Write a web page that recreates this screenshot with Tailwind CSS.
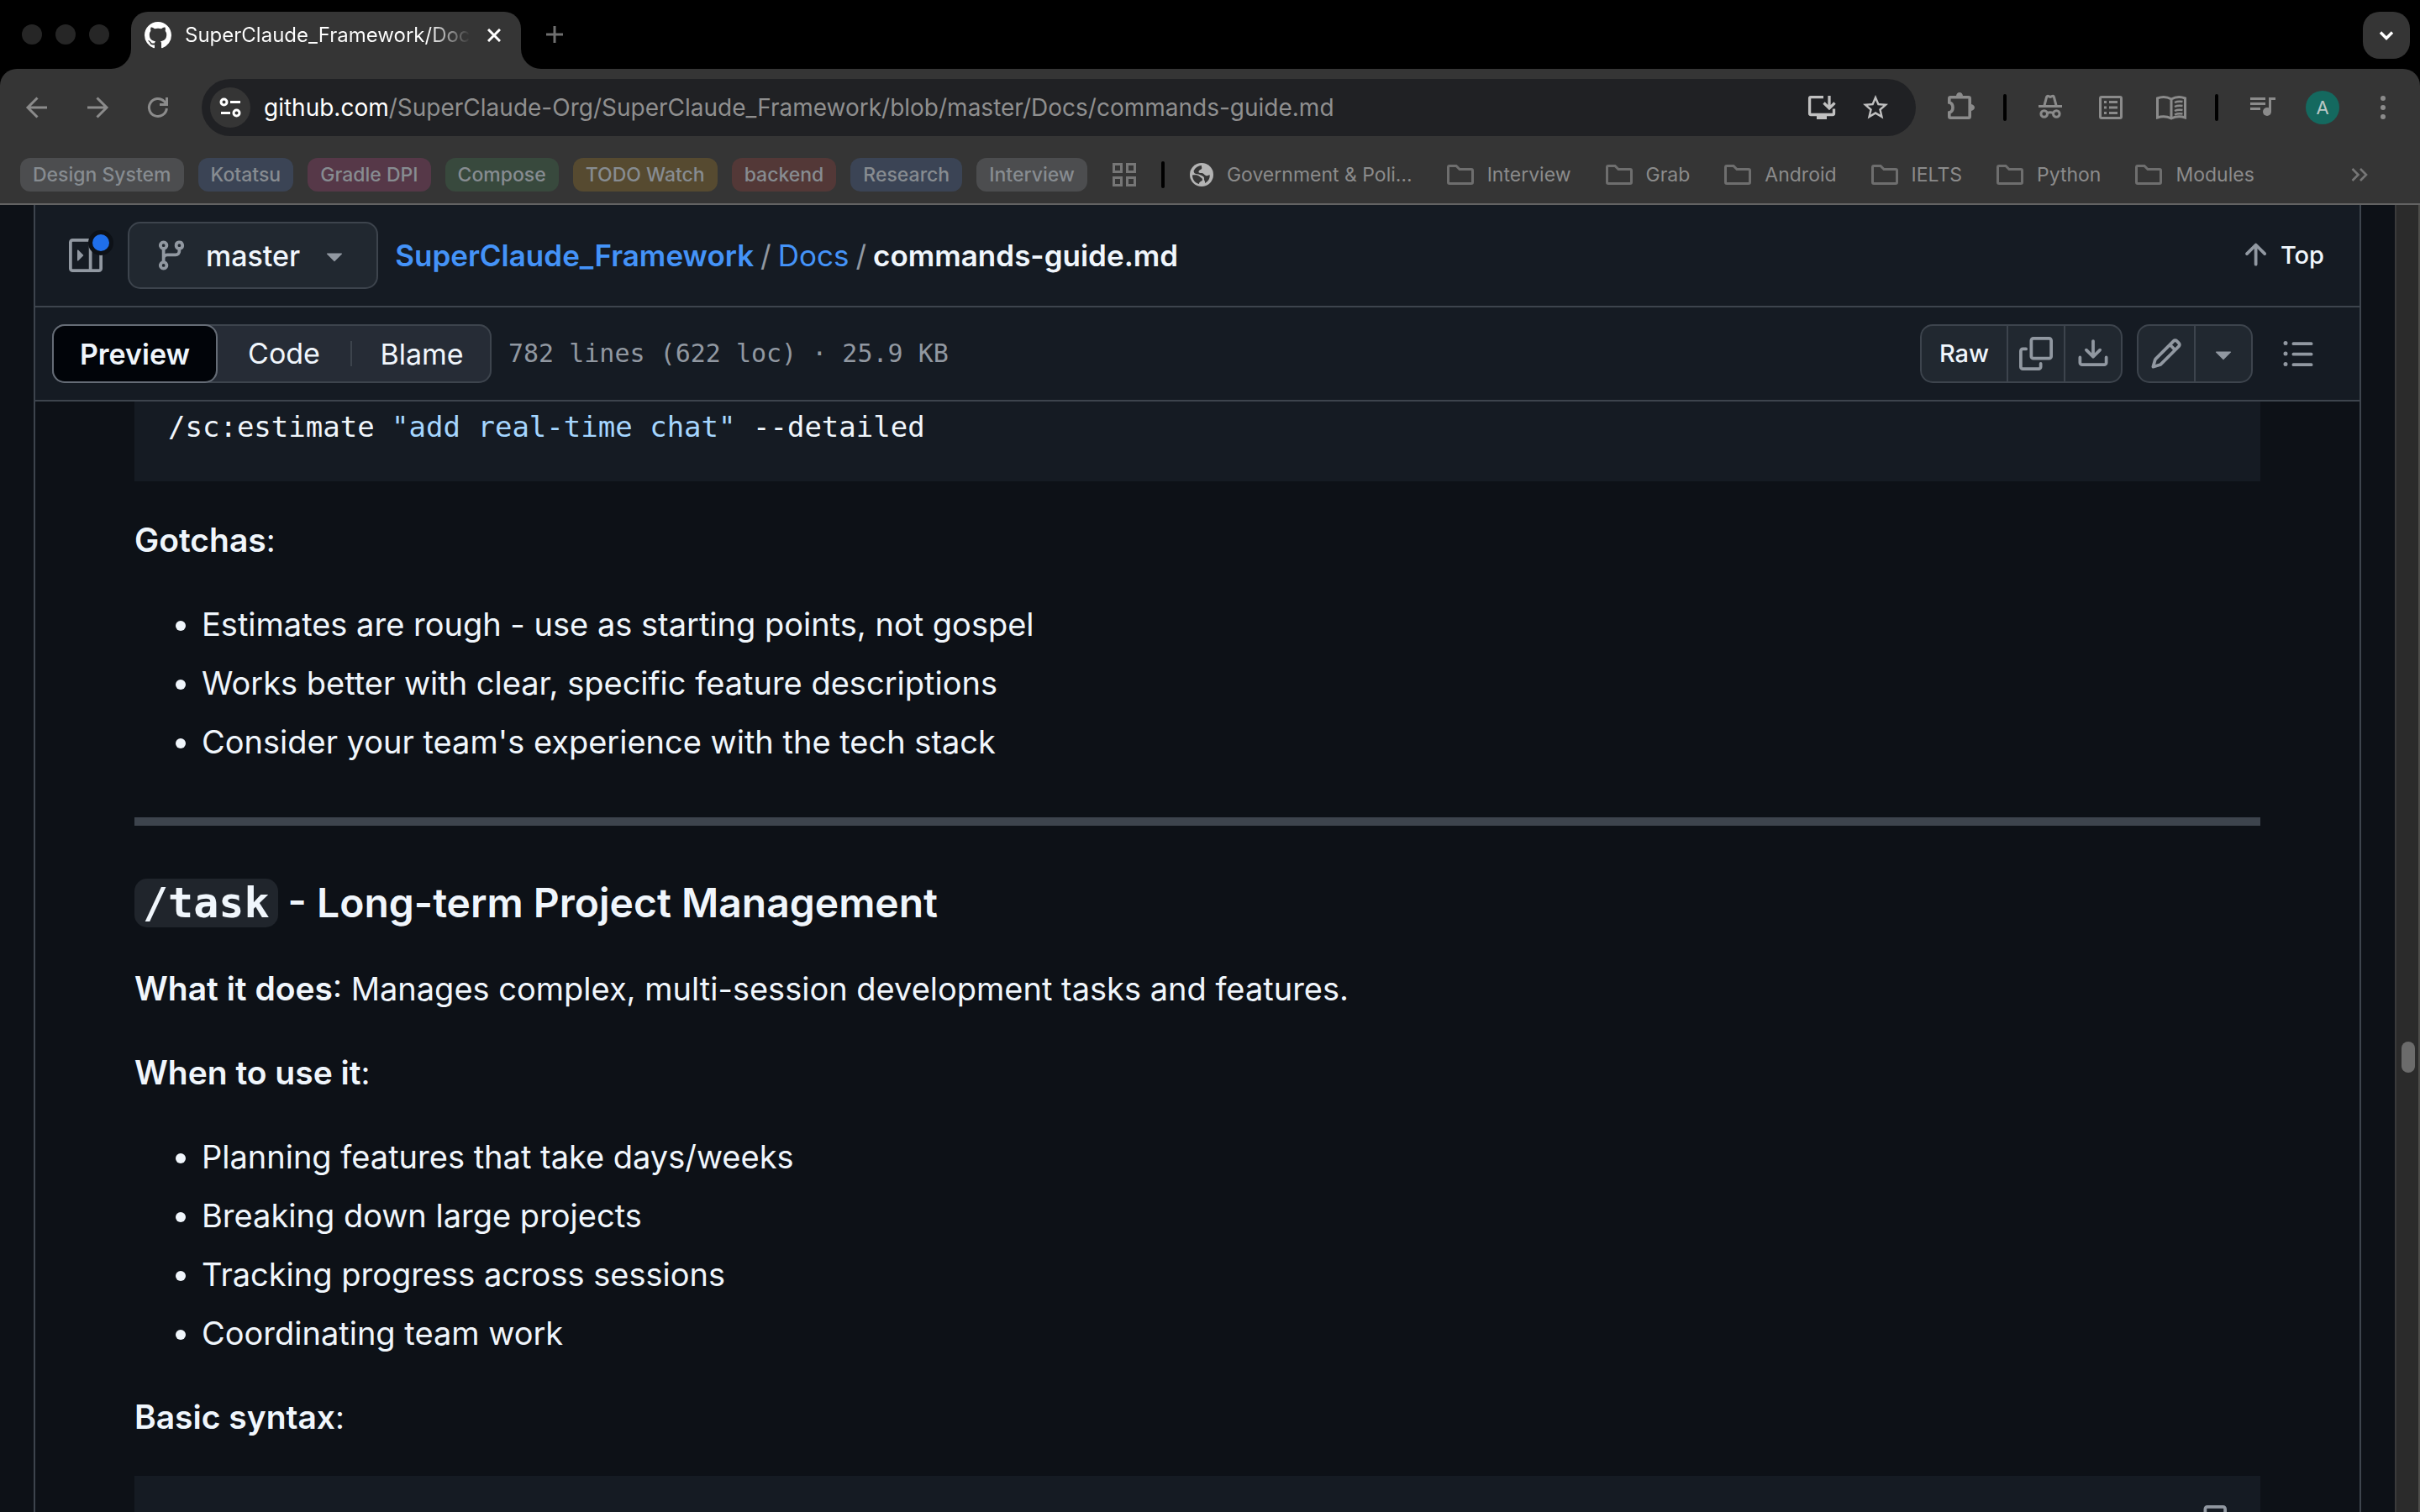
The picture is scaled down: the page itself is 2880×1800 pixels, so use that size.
<!DOCTYPE html>
<html lang="en">
<head>
<meta charset="utf-8">
<title>SuperClaude_Framework/Docs/commands-guide.md</title>
<script src="https://cdn.jsdelivr.net/npm/@tailwindcss/browser@4"></script>
</head>
<body class="flex h-screen flex-col overflow-hidden bg-black font-['Inter',sans-serif] text-[#f0f6fc]">

<!-- Tab strip -->
<header class="shrink-0 bg-black">
  <div class="flex h-[82px] items-end">
    <div class="flex h-full items-center gap-4 pl-[26px] pr-[2px]">
      <span class="size-6 rounded-full bg-[#262626]"></span>
      <span class="size-6 rounded-full bg-[#262626]"></span>
      <span class="size-6 rounded-full bg-[#262626]"></span>
    </div>
    <div class="size-6 bg-[#353535]"><div class="size-6 rounded-br-[24px] bg-black"></div></div>
    <div class="flex h-[68px] w-[464px] items-center rounded-t-[20px] bg-[#353535] pb-3 pl-4 pr-4">
      <svg class="size-8 shrink-0" viewBox="0 0 16 16" fill="#fff"><path d="M8 0c4.42 0 8 3.58 8 8a8.013 8.013 0 0 1-5.45 7.59c-.4.08-.55-.17-.55-.38 0-.27.01-1.13.01-2.2 0-.75-.25-1.23-.54-1.48 1.78-.2 3.65-.88 3.65-3.95 0-.88-.31-1.59-.82-2.15.08-.2.36-1.02-.08-2.12 0 0-.67-.22-2.2.82-.64-.18-1.32-.27-2-.27-.68 0-1.36.09-2 .27-1.53-1.03-2.2-.82-2.2-.82-.44 1.1-.16 1.92-.08 2.12-.51.56-.82 1.28-.82 2.15 0 3.06 1.86 3.75 3.64 3.95-.23.2-.44.55-.51 1.07-.46.21-1.61.55-2.33-.66-.15-.24-.6-.83-1.23-.82-.67.01-.27.38.01.53.34.19.73.9.82 1.13.16.45.68 1.31 2.69.94 0 .67.01 1.3.01 1.49 0 .21-.15.45-.55.38A7.995 7.995 0 0 1 0 8c0-4.42 3.58-8 8-8Z"/></svg>
      <span class="ml-4 flex-1 whitespace-nowrap bg-linear-to-r from-white from-85% to-transparent bg-clip-text text-2xl text-transparent">SuperClaude_Framework/Doc</span>
      <button class="ml-3 grid size-8 shrink-0 place-items-center" aria-label="Close tab"><svg class="size-4" viewBox="0 0 16 16" stroke="#fff" stroke-width="3"><path d="M1 1l14 14M15 1L1 15"/></svg></button>
    </div>
    <div class="size-6 bg-[#353535]"><div class="size-6 rounded-bl-[24px] bg-black"></div></div>
    <button class="grid h-full w-8 place-items-center" aria-label="New tab"><svg class="size-5" viewBox="0 0 20 20" stroke="#6f6f6f" stroke-width="3"><path d="M10 0v20M0 10h20"/></svg></button>
    <button class="mb-3 ml-auto mr-3 grid size-14 place-items-center rounded-[20px] bg-[#353535]" aria-label="Search tabs"><svg class="size-5" viewBox="0 0 20 20" fill="none" stroke="#fff" stroke-width="3.4"><path d="M3 6.5l7 7 7-7"/></svg></button>
  </div>
</header>

<!-- Toolbar and bookmarks -->
<nav class="shrink-0 rounded-t-[20px] border-b-2 border-[#636363] bg-[#353535]">
  <div class="flex items-center gap-8 px-6 pt-3">
    <button aria-label="Back"><svg class="size-10" viewBox="0 0 40 40" fill="none" stroke="#8b8b8b" stroke-width="3"><path d="M32 20H9M20.500 8.500L9 20l11.500 11.500"/></svg></button>
    <button aria-label="Forward"><svg class="size-10" viewBox="0 0 40 40" fill="none" stroke="#8b8b8b" stroke-width="3"><path d="M8 20h23M19.500 8.500L31 20 19.500 31.500"/></svg></button>
    <button aria-label="Reload"><svg class="size-10" viewBox="0 0 40 40" fill="none" stroke="#8b8b8b" stroke-width="3"><path d="M30.400 21A10.500 10.500 0 1 1 27.500 12.700L30 15.500M30.500 8v8.500H22"/></svg></button>
    <div class="flex h-[68px] flex-1 items-center rounded-full bg-[#202124] pl-[10px] pr-7">
      <button class="grid size-12 place-items-center rounded-full bg-[#353535]" aria-label="Site information"><svg class="h-6 w-[26px]" viewBox="0 0 26 24" fill="none" stroke="#fff" stroke-width="3"><circle cx="5.500" cy="5.500" r="3.500"/><path d="M13 5.500h12M2 18.500h11"/><circle cx="20.500" cy="18.500" r="3.500"/></svg></button>
      <p class="ml-4 whitespace-nowrap text-[28px] leading-10 text-[#8f8f8f]"><span class="text-white">github.com</span>/SuperClaude-Org/SuperClaude_Framework/blob/master/Docs/commands-guide.md</p>
      <button class="ml-auto mr-6" aria-label="Install"><svg class="size-10" viewBox="0 0 40 40" fill="none" stroke="#c0c0c0" stroke-width="3.300"><path d="M22 7.700H7Q5.600 7.700 5.600 9v18q0 1.500 1.500 1.500h26q1.400 0 1.400-1.500v-5.500M29 6v14M22.500 14.500L29 21l6.500-6.500"/><path d="M14 29h12v5H14z" fill="#c0c0c0" stroke="none"/></svg></button>
      <button class="grid size-10 place-items-center" aria-label="Bookmark"><svg class="size-9" viewBox="0 0 24 24" fill="#c0c0c0"><path d="M22 9.240l-7.190-.62L12 2 9.190 8.630 2 9.240l5.460 4.730L5.820 21 12 17.270 18.180 21l-1.630-7.030L22 9.240zM12 15.400l-3.760 2.270 1-4.280-3.320-2.880 4.380-.38L12 6.100l1.710 4.040 4.380.38-3.320 2.880 1 4.280L12 15.400z"/></svg></button>
    </div>
    <button aria-label="Extensions"><svg class="size-10" viewBox="-2 0 40 40" fill="none" stroke="#8b8b8b" stroke-width="3.600"><path d="M5.800 14V9.300q0-1.500 1.500-1.500h21.400q1.500 0 1.500 1.500v21.400q0 1.500-1.500 1.500H7.300q-1.500 0-1.500-1.500V26q4.200-1 4.200-6t-4.200-6z"/><path d="M14 6.500a4 4.500 0 0 1 8 0zM31 16a5 4 0 0 1 0 8z" fill="#8b8b8b" stroke="none"/></svg></button>
    <span class="h-8 w-1 rounded-full bg-black"></span>
    <button aria-label="Incognito extension"><svg class="size-10" viewBox="0 0 40 40" fill="none" stroke="#8b8b8b" stroke-width="3"><path d="M6 18.500h28M13 17.500l2.600-10q.5-1.500 2-1l2.400.8 2.400-.8q1.500-.5 2 1l2.600 10"/><circle cx="12.700" cy="27.500" r="3.800"/><circle cx="27.300" cy="27.500" r="3.800"/><path d="M16.500 26.500q3.500-1.500 7 0"/></svg></button>
    <button aria-label="Reading list"><svg class="size-10" viewBox="0 0 40 40" fill="none" stroke="#8b8b8b" stroke-width="3"><rect x="7.500" y="7.500" width="25" height="25" rx="1.500"/><path d="M12 13.500h3M12 20h3M12 26.500h3M18 13.500h10M18 20h10M18 26.500h10"/></svg></button>
    <button aria-label="Reading mode"><svg class="size-10" viewBox="0 0 40 40" fill="none" stroke="#8b8b8b" stroke-width="3"><path d="M20 10q-8-4.500-16.500-1v23q8.500-3 16.500 1 8-4 16.500-1V9Q28 5.500 20 10v23"/><path d="M24 14q4-2 9.500-1M24 19q4-2 9.500-1M24 24q4-2 9.500-1M24 28.500q4-2 9.500-1" stroke-width="2.500"/></svg></button>
    <span class="h-8 w-1 rounded-full bg-black"></span>
    <button aria-label="Media controls"><svg class="size-10" viewBox="0 0 40 40" fill="none" stroke="#8b8b8b" stroke-width="3"><path d="M6 9.500h18M6 15.500h18M6 21.500h12M36 9.500h-6.500V25"/><circle cx="26" cy="25" r="5" fill="#8b8b8b" stroke="none"/></svg></button>
    <button class="grid size-10 place-items-center rounded-full bg-[#14695f] text-[22px] leading-none text-[#b9c7c5]" aria-label="Profile">A</button>
    <button aria-label="Menu"><svg class="size-10" viewBox="0 0 40 40" fill="#8b8b8b"><circle cx="20" cy="9" r="3"/><circle cx="20" cy="20" r="3"/><circle cx="20" cy="31" r="3"/></svg></button>
  </div>
  <div class="flex items-center pb-[14px] pl-6 pr-[62px] pt-[26px] text-[23px] leading-10 text-[#8b8b8b]">
    <div class="flex gap-[17px] font-medium text-[#878c91]">
      <button class="rounded-xl bg-[#4c4d4f] px-[15px]">Design System</button>
      <button class="rounded-xl bg-[#3b4455] px-[15px]">Kotatsu</button>
      <button class="rounded-xl bg-[#563848] px-[15px]">Gradle DPI</button>
      <button class="rounded-xl bg-[#38493d] px-[15px]">Compose</button>
      <button class="rounded-xl bg-[#564a30] px-[15px]">TODO Watch</button>
      <button class="rounded-xl bg-[#533837] px-[15px]">backend</button>
      <button class="rounded-xl bg-[#3b4455] px-[15px]">Research</button>
      <button class="rounded-xl bg-[#4c4d4f] px-[15px]">Interview</button>
    </div>
    <button class="mx-[30px]" aria-label="All tab groups"><svg class="size-7" viewBox="0 0 28 28" fill="none" stroke="#767676" stroke-width="3"><path d="M1.500 1.500h9v9h-9zM17.500 1.500h9v9h-9zM1.500 17.500h9v9h-9zM17.500 17.500h9v9h-9z"/></svg></button>
    <span class="h-8 w-1 rounded-full bg-black"></span>
    <div class="ml-[30px] flex gap-[41px]">
      <a href="#" class="flex items-center gap-4"><svg class="size-7" viewBox="0 0 28 28"><circle cx="14" cy="14" r="14" fill="#b4b4b4"/><path d="M3 14.500c3.500-.5 6.500-.5 8.500 1.500s3.500 2 3.500 4-4 1.500-4 5C6.500 24 3 20 3 14.500zM4.500 9.500C6.500 5.500 10 3.300 14 3c-.5 2 1 2.500 0 4s-3 1-3.500 3 2 2 4 2 2.500 2.500 4.500 3 3 0 4.500-1c1 4-2 8.500-5.500 10 .5-3-1.500-3-1-5.500S14 15 12 14s-4.500-.5-6-1.500-1-2-1.500-3z" fill="#353535"/></svg>Government &amp; Poli…</a>
      <a href="#" class="flex items-center gap-4"><svg class="h-6 w-8" viewBox="0 0 32 24" fill="none" stroke="#6e6e6e" stroke-width="3"><path d="M1.500 3q0-1.500 1.500-1.500h8l4 4h14q1.500 0 1.500 1.500v14q0 1.500-1.500 1.500H3q-1.500 0-1.500-1.500z"/></svg>Interview</a>
      <a href="#" class="flex items-center gap-4"><svg class="h-6 w-8" viewBox="0 0 32 24" fill="none" stroke="#6e6e6e" stroke-width="3"><path d="M1.500 3q0-1.500 1.500-1.500h8l4 4h14q1.500 0 1.500 1.500v14q0 1.500-1.500 1.500H3q-1.500 0-1.500-1.500z"/></svg>Grab</a>
      <a href="#" class="flex items-center gap-4"><svg class="h-6 w-8" viewBox="0 0 32 24" fill="none" stroke="#6e6e6e" stroke-width="3"><path d="M1.500 3q0-1.500 1.500-1.500h8l4 4h14q1.500 0 1.500 1.500v14q0 1.500-1.500 1.500H3q-1.500 0-1.500-1.500z"/></svg>Android</a>
      <a href="#" class="flex items-center gap-4"><svg class="h-6 w-8" viewBox="0 0 32 24" fill="none" stroke="#6e6e6e" stroke-width="3"><path d="M1.500 3q0-1.500 1.500-1.500h8l4 4h14q1.500 0 1.500 1.500v14q0 1.500-1.500 1.500H3q-1.500 0-1.500-1.500z"/></svg>IELTS</a>
      <a href="#" class="flex items-center gap-4"><svg class="h-6 w-8" viewBox="0 0 32 24" fill="none" stroke="#6e6e6e" stroke-width="3"><path d="M1.500 3q0-1.500 1.500-1.500h8l4 4h14q1.500 0 1.500 1.500v14q0 1.500-1.500 1.500H3q-1.500 0-1.500-1.500z"/></svg>Python</a>
      <a href="#" class="flex items-center gap-4"><svg class="h-6 w-8" viewBox="0 0 32 24" fill="none" stroke="#6e6e6e" stroke-width="3"><path d="M1.500 3q0-1.500 1.500-1.500h8l4 4h14q1.500 0 1.500 1.500v14q0 1.500-1.500 1.500H3q-1.500 0-1.500-1.500z"/></svg>Modules</a>
    </div>
    <button class="ml-auto" aria-label="More bookmarks"><svg class="h-4 w-5" viewBox="0 0 20 16" fill="none" stroke="#767676" stroke-width="2.600"><path d="M1.500 1l7 7-7 7M11 1l7 7-7 7"/></svg></button>
  </div>
</nav>

<div class="flex min-h-0 flex-1 bg-[#0d1117]">
  <main class="flex min-w-0 flex-1 flex-col px-10">
    <div class="flex min-h-0 flex-1 flex-col border-x-2 border-[#3d444d]">

      <!-- File path -->
      <div class="flex h-[122px] shrink-0 items-center border-b-2 border-[#3d444d] bg-[#151b23] px-5 text-[35px]">
        <button class="flex h-20 w-20 items-center justify-center" aria-label="Expand file tree">
          <svg class="size-10 overflow-visible" viewBox="0 0 16 16" fill="#9198a1"><path d="M0 1.750C0 .784.784 0 1.750 0h12.500C15.216 0 16 .784 16 1.750v12.500A1.750 1.750 0 0 1 14.250 16H1.750A1.750 1.750 0 0 1 0 14.250Zm1.750-.25a.25.25 0 0 0-.25.25v12.500c0 .138.112.25.25.25H9.500v-13Zm12.500 13a.25.25 0 0 0 .25-.25V1.750a.25.25 0 0 0-.25-.25H11v13Z"/><path d="M6.823 7.823 4.427 5.427A.25.25 0 0 0 4 5.604v4.792c0 .223.270.335.427.177l2.396-2.396a.25.25 0 0 0 0-.354Z"/><circle cx="15.200" cy="2" r="6" fill="#0d1117"/><circle cx="15.200" cy="2" r="4" fill="#1f6feb"/></svg>
        </button>
        <button class="ml-[10px] flex h-20 items-center rounded-[15px] border-2 border-[#3d444d] bg-[#212830] px-[30px] text-[34px] font-medium">
          <svg class="size-10" viewBox="0 0 16 16" fill="#9198a1"><path d="M9.500 3.250a2.250 2.250 0 1 1 3 2.122V6A2.500 2.500 0 0 1 10 8.500H6a1 1 0 0 0-1 1v1.128a2.251 2.251 0 1 1-1.500 0V5.372a2.250 2.250 0 1 1 1.500 0v1.836A2.493 2.493 0 0 1 6 7h4a1 1 0 0 0 1-1v-.628A2.250 2.250 0 0 1 9.500 3.250Zm-6 0a.75.75 0 1 0 1.500 0 .75.75 0 0 0-1.500 0Zm8.250-.75a.75.75 0 1 0 0 1.500.75.75 0 0 0 0-1.500ZM4.250 12a.75.75 0 1 0 0 1.500.75.75 0 0 0 0-1.500Z"/></svg>
          <span class="mx-[21px]">master</span>
          <svg class="size-10" viewBox="0 0 16 16" fill="#9198a1"><path d="m4.427 7.427 3.396 3.396a.25.25 0 0 0 .354 0l3.396-3.396A.25.25 0 0 0 11.396 7H4.604a.25.25 0 0 0-.177.427Z"/></svg>
        </button>
        <div class="ml-5 flex whitespace-nowrap">
          <a href="#" class="font-semibold text-[#4493f8]">SuperClaude_Framework</a>
          <span class="mx-2 text-[#9198a1]">/</span>
          <a href="#" class="text-[#4493f8]">Docs</a>
          <span class="mx-2 text-[#9198a1]">/</span>
          <h1 class="font-semibold">commands-guide.md</h1>
        </div>
        <a href="#" class="ml-auto flex items-center gap-[10px] pr-[22px] text-[29px] font-medium">
          <svg class="size-10" viewBox="0 0 16 16" fill="#9198a1"><path d="M3.470 7.780a.75.75 0 0 1 0-1.060l4.250-4.250a.75.75 0 0 1 1.060 0l4.250 4.250a.751.751 0 0 1-.018 1.042.751.751 0 0 1-1.042.018L9 4.810v7.440a.75.75 0 0 1-1.500 0V4.810L4.530 7.780a.75.75 0 0 1-1.060 0Z"/></svg>Top</a>
      </div>

      <!-- View switcher and file actions -->
      <div class="flex h-[112px] shrink-0 items-center border-b-2 border-[#3d444d] bg-[#151b23] px-5">
        <div class="flex h-[70px] items-center rounded-[15px] bg-[#262c36] text-[34px] inset-ring-2 inset-ring-[#3d444d]">
          <button class="h-[70px] w-[197px] rounded-[15px] border-2 border-[#656c76] bg-[#010409] font-semibold">Preview</button>
          <button class="w-40 border-r-2 border-[#3d444d] leading-[30px]">Code</button>
          <button class="w-[166px]">Blame</button>
        </div>
        <span class="ml-5 whitespace-nowrap font-['DejaVu_Sans_Mono',monospace] text-3xl text-[#9198a1]">782 lines (622 loc) · 25.9 KB</span>
        <div class="ml-auto flex h-[70px] rounded-[15px] border-2 border-[#3d444d] bg-[#212830]">
          <button class="w-[103px] border-r-2 border-[#3d444d] text-[29px] font-medium">Raw</button>
          <button class="grid w-[68px] place-items-center border-r-2 border-[#3d444d]" aria-label="Copy raw file"><svg class="size-10" viewBox="0 0 16 16" fill="#9198a1"><path d="M0 6.750C0 5.784.784 5 1.750 5h1.500a.75.75 0 0 1 0 1.500h-1.500a.25.25 0 0 0-.25.25v7.500c0 .138.112.25.25.25h7.500a.25.25 0 0 0 .25-.25v-1.500a.75.75 0 0 1 1.500 0v1.500A1.750 1.750 0 0 1 9.250 16h-7.500A1.750 1.750 0 0 1 0 14.250Z"/><path d="M5 1.750C5 .784 5.784 0 6.750 0h7.500C15.216 0 16 .784 16 1.750v7.500A1.750 1.750 0 0 1 14.250 11h-7.500A1.750 1.750 0 0 1 5 9.250Zm1.750-.25a.25.25 0 0 0-.25.25v7.500c0 .138.112.25.25.25h7.500a.25.25 0 0 0 .25-.25v-7.500a.25.25 0 0 0-.25-.25Z"/></svg></button>
          <button class="grid w-[66px] place-items-center" aria-label="Download raw file"><svg class="size-10" viewBox="0 0 16 16" fill="#9198a1"><path d="M2.750 14A1.750 1.750 0 0 1 1 12.250v-2.500a.75.75 0 0 1 1.500 0v2.500c0 .138.112.25.25.25h10.500a.25.25 0 0 0 .25-.25v-2.500a.75.75 0 0 1 1.500 0v2.500A1.750 1.750 0 0 1 13.250 14Z"/><path d="M7.250 7.689V2a.75.75 0 0 1 1.500 0v5.689l1.970-1.969a.749.749 0 1 1 1.060 1.060l-3.250 3.250a.749.749 0 0 1-1.060 0L4.220 6.780a.749.749 0 1 1 1.060-1.060l1.970 1.969Z"/></svg></button>
        </div>
        <div class="ml-[17px] flex h-[70px] rounded-[15px] border-2 border-[#3d444d] bg-[#212830]">
          <button class="grid w-[68px] place-items-center border-r-2 border-[#3d444d]" aria-label="Edit file"><svg class="size-10" viewBox="0 0 16 16" fill="#9198a1"><path d="M11.013 1.427a1.750 1.750 0 0 1 2.474 0l1.086 1.086a1.750 1.750 0 0 1 0 2.474l-8.610 8.610c-.21.21-.47.364-.756.445l-3.251.93a.75.75 0 0 1-.927-.928l.929-3.250c.081-.286.235-.547.445-.758l8.610-8.610Zm.176 4.823L9.750 4.810l-6.286 6.287a.253.253 0 0 0-.064.108l-.558 1.953 1.953-.558a.253.253 0 0 0 .108-.064Zm1.238-3.763a.25.25 0 0 0-.354 0L10.811 3.750l1.439 1.440 1.263-1.263a.25.25 0 0 0 0-.354Z"/></svg></button>
          <button class="grid w-[66px] place-items-center" aria-label="More edit options"><svg class="size-10" viewBox="0 0 16 16" fill="#9198a1"><path d="m4.427 7.427 3.396 3.396a.25.25 0 0 0 .354 0l3.396-3.396A.25.25 0 0 0 11.396 7H4.604a.25.25 0 0 0-.177.427Z"/></svg></button>
        </div>
        <button class="grid h-[70px] w-[107px] place-items-center" aria-label="Outline"><svg class="size-10" viewBox="0 0 16 16" fill="#9198a1"><path d="M5.750 2.500h8.500a.75.75 0 0 1 0 1.500h-8.500a.75.75 0 0 1 0-1.500Zm0 5h8.500a.75.75 0 0 1 0 1.500h-8.500a.75.75 0 0 1 0-1.500Zm0 5h8.500a.75.75 0 0 1 0 1.500h-8.500a.75.75 0 0 1 0-1.500ZM2 14a1 1 0 1 1 0-2 1 1 0 0 1 0 2Zm1-6a1 1 0 1 1-2 0 1 1 0 0 1 2 0ZM2 4a1 1 0 1 1 0-2 1 1 0 0 1 0 2Z"/></svg></button>
      </div>

      <!-- Document -->
      <article class="min-h-0 flex-1 overflow-hidden px-[118px] text-[38px] leading-[60px]">
        <pre class="bg-[#151b23] px-10 pb-10 pt-[6px] font-['DejaVu_Sans_Mono',monospace] text-[34px] leading-[49px]"><code class="font-['DejaVu_Sans_Mono',monospace]">/sc:estimate <span class="text-[#a5d6ff]">"add real-time chat"</span> --detailed</code></pre>
        <p class="mt-10"><strong class="text-[39px] font-semibold">Gotchas</strong>:</p>
        <ul class="mt-10 flex list-disc flex-col gap-[10px] pl-20">
          <li>Estimates are rough - use as starting points, not gospel</li>
          <li>Works better with clear, specific feature descriptions</li>
          <li>Consider your team's experience with the tech stack</li>
        </ul>
        <hr class="my-[60px] h-[10px] border-0 bg-[#3d444d]">
        <h3 class="text-5xl font-semibold leading-[64px]"><code class="rounded-[15px] bg-[#20252c] px-[10px] font-['DejaVu_Sans_Mono',monospace] text-[50px]">/task</code> - Long-term Project Management</h3>
        <p class="mt-10"><strong class="text-[39px] font-semibold">What it does</strong>: Manages complex, multi-session development tasks and features.</p>
        <p class="mt-10"><strong class="text-[39px] font-semibold">When to use it</strong>:</p>
        <ul class="mt-10 flex list-disc flex-col gap-[10px] pl-20">
          <li>Planning features that take days/weeks</li>
          <li>Breaking down large projects</li>
          <li>Tracking progress across sessions</li>
          <li>Coordinating team work</li>
        </ul>
        <p class="mt-10"><strong class="text-[39px] font-semibold">Basic syntax</strong>:</p>
        <div class="mt-10 flex h-32 justify-end bg-[#151b23] px-10 pt-[35px]">
          <button class="self-start" aria-label="Copy"><svg class="size-10" viewBox="0 0 16 16" fill="#9198a1"><path d="M0 6.750C0 5.784.784 5 1.750 5h1.500a.75.75 0 0 1 0 1.500h-1.500a.25.25 0 0 0-.25.25v7.500c0 .138.112.25.25.25h7.500a.25.25 0 0 0 .25-.25v-1.500a.75.75 0 0 1 1.500 0v1.500A1.750 1.750 0 0 1 9.250 16h-7.500A1.750 1.750 0 0 1 0 14.250Z"/><path d="M5 1.750C5 .784 5.784 0 6.750 0h7.500C15.216 0 16 .784 16 1.750v7.500A1.750 1.750 0 0 1 14.250 11h-7.500A1.750 1.750 0 0 1 5 9.250Zm1.750-.25a.25.25 0 0 0-.25.25v7.500c0 .138.112.25.25.25h7.500a.25.25 0 0 0 .25-.25v-7.500a.25.25 0 0 0-.25-.25Z"/></svg></button>
        </div>
      </article>
    </div>
  </main>

  <!-- Scrollbar -->
  <div class="w-[30px] shrink-0 border-x-2 border-l-[#3b3b3b] border-r-[#4d4d4a] bg-[#2b2b2b] pt-[996px]">
    <div class="ml-[6px] h-[37px] w-4 rounded-full bg-[#6b6b6b]"></div>
  </div>
</div>
</body>
</html>
